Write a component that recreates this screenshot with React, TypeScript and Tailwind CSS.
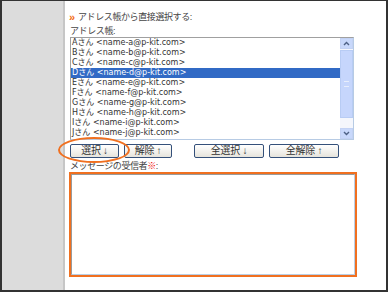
const contacts = ["A", "B", "C", "D", "E", "F", "G", "H", "I", "J"];

function XpButton({ label, width }: { label: string; width: string }) {
  return (
    <button
      type="button"
      className={
        "flex h-[14px] items-center justify-center rounded-[2px] border border-[#34507a] bg-gradient-to-b from-white to-[#e6e4dc] text-[10px] leading-none tracking-[-0.3px] text-[#333] " +
        width
      }
    >
      {label}
    </button>
  );
}

function ScrollBar() {
  return (
    <div className="flex w-[13px] flex-col bg-[#f4f6fc]">
      <div className="flex h-[11px] items-center justify-center border border-[#c3d2f4] bg-[#c8d8fb]">
        <svg width="7" height="5" viewBox="0 0 7 5">
          <path d="M1 4 L3.5 1.5 L6 4" fill="none" stroke="#4d6185" strokeWidth="1.4" />
        </svg>
      </div>
      <div className="mt-px flex h-[68px] items-center justify-center border border-[#b8ccf4] bg-[#c6d6fc]">
        <div className="h-[6px] w-[5px] border-y border-[#e8eefc]" />
      </div>
      <div className="flex-1" />
      <div className="flex h-[11px] items-center justify-center border border-[#c3d2f4] bg-[#c8d8fb]">
        <svg width="7" height="5" viewBox="0 0 7 5">
          <path d="M1 1 L3.5 3.5 L6 1" fill="none" stroke="#4d6185" strokeWidth="1.4" />
        </svg>
      </div>
    </div>
  );
}

export default function App() {
  return (
    <div
      className="flex h-[292px] w-[388px] border-x-2 border-t border-b-2 border-[#333] bg-white text-[#444]"
      style={{ fontFamily: '"Liberation Sans", "Noto Sans CJK JP", sans-serif' }}
    >
      <div className="w-[63px] border-r-2 border-[#c6c6c6] bg-[#dcdcdc]" />

      <div className="flex-1 pl-[4px] pt-[10px]">
        <div className="flex h-[12px] items-center text-[9px] leading-none tracking-[-0.4px]">
          <span className="w-[9px] text-[11px] font-bold tracking-normal text-[#f26a10]">»</span>
          <span>アドレス帳から直接選択する:</span>
        </div>
        <div className="mt-[2px] h-[12px] pl-px text-[9px] leading-[12px] tracking-[-0.4px]">アドレス帳:</div>

        <div className="ml-px flex h-[103px] w-[284px] border border-t-[#a0a0a0] border-l-[#a0a0a0] border-r-[#b7cbe4] border-b-[#b7cbe4] bg-white">
          <ul
            className="flex-1 text-[8px] leading-[10px]"
            style={{ fontFamily: '"DejaVu Sans", "Noto Sans CJK JP", sans-serif' }}
          >
            {contacts.map((c) => (
              <li
                key={c}
                className={
                  "h-[10px] whitespace-nowrap pl-px " +
                  (c === "D" ? "bg-[#316ac5] text-white" : "text-[#333]")
                }
              >
                {c}さん &lt;name-{c.toLowerCase()}@p-kit.com&gt;
              </li>
            ))}
          </ul>
          <ScrollBar />
        </div>

        <div className="ml-px mt-[4px] flex">
          <div className="relative">
            <XpButton label="選択 ↓" width="w-[49px]" />
            <div className="absolute left-[-12px] top-[-7px] h-[26px] w-[72px] rounded-[50%] border-2 border-[#f07020]" />
          </div>
          <div className="ml-[5px]">
            <XpButton label="解除 ↑" width="w-[48px]" />
          </div>
          <div className="ml-[22px]">
            <XpButton label="全選択 ↓" width="w-[70px]" />
          </div>
          <div className="ml-[5px]">
            <XpButton label="全解除 ↑" width="w-[70px]" />
          </div>
        </div>

        <div className="mt-[2px] h-[12px] pl-px text-[9px] leading-[12px] tracking-[-0.4px]">
          メッセージの受信者<span className="text-[#e00]">※</span>:
        </div>

        <div className="h-[105px] w-[288px] border-2 border-[#f07020]">
          <div className="h-full w-full border border-t-[#9a9a9a] border-l-[#9a9a9a] border-r-[#b9cfe6] border-b-[#b9cfe6] bg-white" />
        </div>
      </div>
    </div>
  );
}
